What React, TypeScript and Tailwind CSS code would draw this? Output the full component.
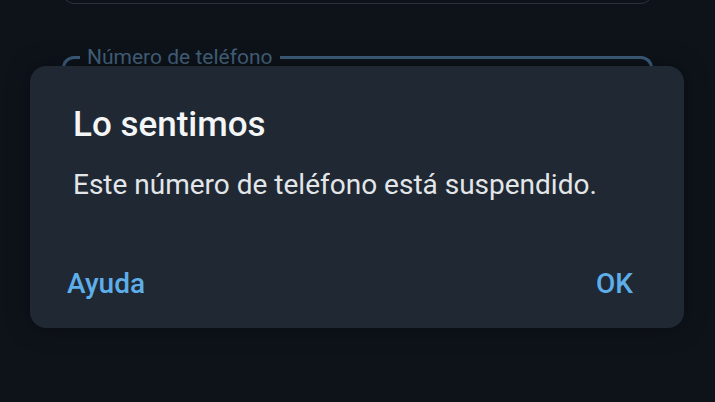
import React from "react";

export default function App() {
  return (
    <div
      className="relative w-[715px] h-[402px] overflow-hidden bg-[#0e131a]"
      style={{ fontFamily: "Roboto, 'Noto Sans', sans-serif" }}
    >
      {/* Form fields behind the dialog */}
      <div className="flex flex-col px-[62px]">
        <div className="-mt-[40px] h-[44px] rounded-[12px] border border-[#2a323c]" />
        <div className="relative mt-[52px] h-[60px] rounded-t-[12px] border-x-[3px] border-t-[3px] border-[#3d5d7c]">
          <span className="absolute -top-[14px] left-[15px] bg-[#0e131a] px-[7px] text-[21px] leading-[24px] text-[#44627d]">
            Número de teléfono
          </span>
        </div>
      </div>

      {/* Alert dialog */}
      <div className="absolute left-[30px] top-[66px] flex h-[262px] w-[654px] flex-col rounded-[16px] bg-[#1f2833] shadow-[0_0_24px_rgba(0,0,0,0.35)]">
        <div className="px-[43px] pt-[37px]">
          <h2 className="text-[35px] font-medium leading-[44px] text-[#f4f5f6]">
            Lo sentimos
          </h2>
          <p className="mt-[22px] text-[28px] leading-[32px] text-[#e3e6e9]">
            Este número de teléfono está suspendido.
          </p>
        </div>
        <div className="mt-auto mb-[26px] flex items-center justify-between pl-[37px] pr-[51px]">
          <button className="text-[28px] font-medium leading-[36px] text-[#5eaee9]">
            Ayuda
          </button>
          <button className="text-[28px] font-medium leading-[36px] text-[#5eaee9]">
            OK
          </button>
        </div>
      </div>
    </div>
  );
}
